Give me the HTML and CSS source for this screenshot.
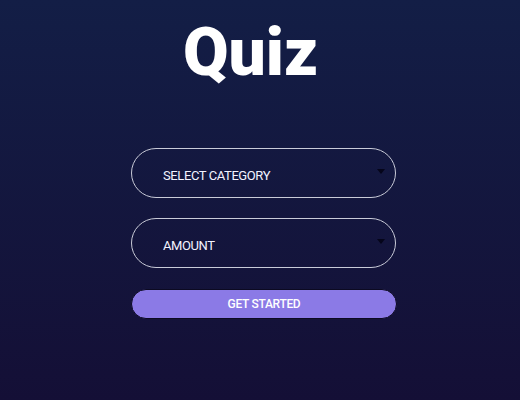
FILE: index.html
```html
<!DOCTYPE html>
<html lang="en">
<head>
<meta charset="utf-8">
<title>Quiz</title>
<link rel="stylesheet" href="styles.css">
</head>
<body>
<main class="app">
  <h1 class="title">Quiz</h1>
  <form class="setup">
    <div class="select">
      <span class="select-label">SELECT CATEGORY</span>
      <span class="caret"></span>
    </div>
    <div class="select">
      <span class="select-label">AMOUNT</span>
      <span class="caret"></span>
    </div>
    <button type="button" class="start">GET STARTED</button>
  </form>
</main>
</body>
</html>
```
FILE: styles.css
```css
html, body {
  margin: 0;
  height: 100%;
}
body {
  background: linear-gradient(180deg, #131e46 0%, #140f36 100%);
  font-family: Roboto, "Noto Sans", sans-serif;
  color: #fff;
}
.app {
  display: flex;
  flex-direction: column;
  align-items: flex-start;
  padding-left: 131px;
}
.title {
  margin: 14px 0 0 52px;
  font-size: 66px;
  font-weight: 900;
  line-height: 78px;
  color: #fff;
}
.setup {
  margin-top: 56px;
  display: flex;
  flex-direction: column;
  gap: 20px;
  width: 265px;
}
.select {
  box-sizing: border-box;
  height: 50px;
  border: 1px solid #c9cbd8;
  border-radius: 25px;
  display: flex;
  align-items: center;
  justify-content: space-between;
  padding: 0 10px 0 31px;
}
.select-label {
  font-size: 13px;
  letter-spacing: -0.4px;
  color: #f2f3ff;
  padding-top: 5px;
}
.caret {
  width: 0;
  height: 0;
  border-left: 4.5px solid transparent;
  border-right: 4.5px solid transparent;
  border-top: 5px solid #05051a;
  margin-bottom: 3px;
}
.start {
  margin: 1px 0 0 0;
  box-sizing: border-box;
  height: 30px;
  width: 266px;
  border: 1px solid #0c0a22;
  border-radius: 15px;
  background: #8b7ae6;
  color: #fff;
  font-family: Roboto, "Noto Sans", sans-serif;
  font-size: 12px;
  font-weight: 500;
  letter-spacing: -0.3px;
}
```
